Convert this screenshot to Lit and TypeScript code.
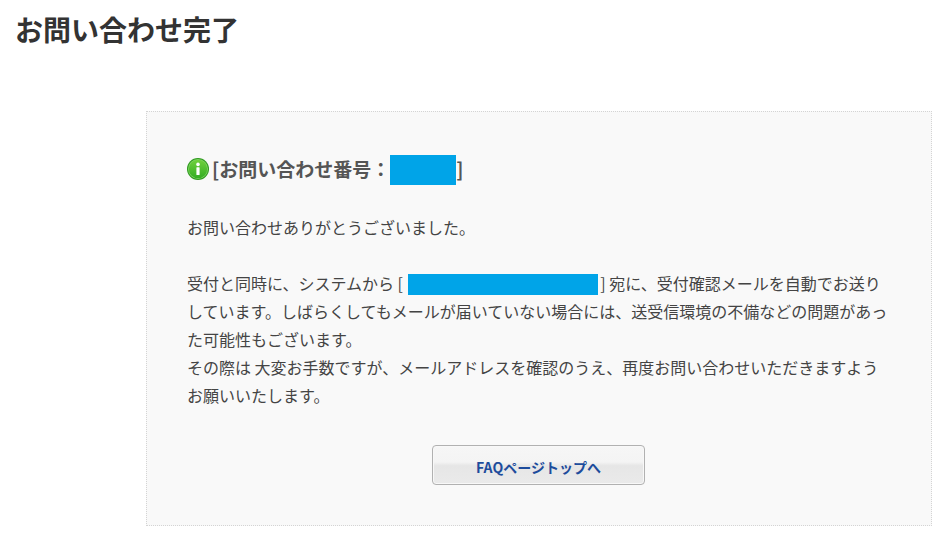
import { LitElement, html, css } from "lit";
import { customElement } from "lit/decorators.js";

@customElement("app-root")
export class AppRoot extends LitElement {
  static styles = css`
    :host {
      display: block;
      width: 950px;
      height: 546px;
      overflow: hidden;
      background: #fff;
      font-family: "Noto Sans CJK JP", "Noto Sans", sans-serif;
      color: #444;
      box-sizing: border-box;
      padding: 9px 18px 0 15px;
    }
    h1 {
      margin: 0 0 61px;
      font-size: 28px;
      line-height: 41px;
      font-weight: 700;
      color: #333;
    }
    .panel {
      margin-left: 131px;
      height: 415px;
      box-sizing: border-box;
      border: 1px dotted #d4d4d4;
      background: #f9f9f9;
      padding: 40px 40px 0 40px;
    }
    .head {
      display: flex;
      align-items: center;
      height: 36px;
      margin-top: -2px;
      font-size: 19px;
      font-weight: 700;
      color: #555;
      white-space: nowrap;
    }
    .icon { width: 22px; height: 22px; margin: 2px 3px 0 0; flex: none; }
    .id { width: 66px; height: 30px; background: #00a4e8; margin-top: 4px; }
    .body {
      margin: 27px 0 0;
      font-size: 16px;
      line-height: 28px;
      color: #444;
    }
    .mail {
      display: inline-block;
      width: 190px;
      height: 21px;
      background: #00a4e8;
      vertical-align: -5px;
      margin: 0 -1px 0 1px;
    }
    .actions { display: flex; justify-content: center; margin-top: 36px; }
    .btn {
      width: 213px;
      height: 40px;
      margin-right: 1px;
      box-sizing: border-box;
      border: 1px solid #b1b1b1;
      border-radius: 4px;
      box-shadow: inset 0 0 0 1px #f8f8f8;
      background: linear-gradient(#f6f6f6 0, #f4f4f4 42%, #e6e6e6 52%, #eaeaea 100%);
      color: #1d4c9c;
      font-size: 14px;
      font-weight: 700;
      line-height: 1;
      padding: 3px 0 0;
      text-align: center;
      font-family: "Noto Sans CJK JP", sans-serif;
      cursor: pointer;
    }
  `;

  render() {
    return html`
      <h1>お問い合わせ完了</h1>
      <div class="panel">
        <div class="head">
          <svg class="icon" viewBox="0 0 22 22">
            <defs>
              <linearGradient id="g" x1="0" y1="0" x2="0" y2="1">
                <stop offset="0" stop-color="#6fd03c"></stop>
                <stop offset="1" stop-color="#34ad24"></stop>
              </linearGradient>
            </defs>
            <circle cx="11" cy="11" r="11" fill="#2f9a1f"></circle>
            <circle cx="11" cy="11" r="10" fill="#7fd562"></circle>
            <circle cx="11" cy="11" r="9.2" fill="url(#g)"></circle>
            <circle cx="11" cy="6.4" r="1.8" fill="#fff"></circle>
            <rect x="9.4" y="9.2" width="3.2" height="7.8" rx="0.6" fill="#fff"></rect>
          </svg>
          <span>[お問い合わせ番号：</span><span class="id"></span><span>]</span>
        </div>
        <div class="body">
          お問い合わせありがとうございました。<br /><br />
          受付と同時に、システムから [ <span class="mail"></span> ] 宛に、受付確認メールを自動でお送りしています。しばらくしてもメールが届いていない場合には、送受信環境の不備などの問題があった可能性もございます。<br />
          その際は 大変お手数ですが、メールアドレスを確認のうえ、再度お問い合わせいただきますようお願いいたします。
        </div>
        <div class="actions"><button class="btn">FAQページトップへ</button></div>
      </div>
    `;
  }
}
